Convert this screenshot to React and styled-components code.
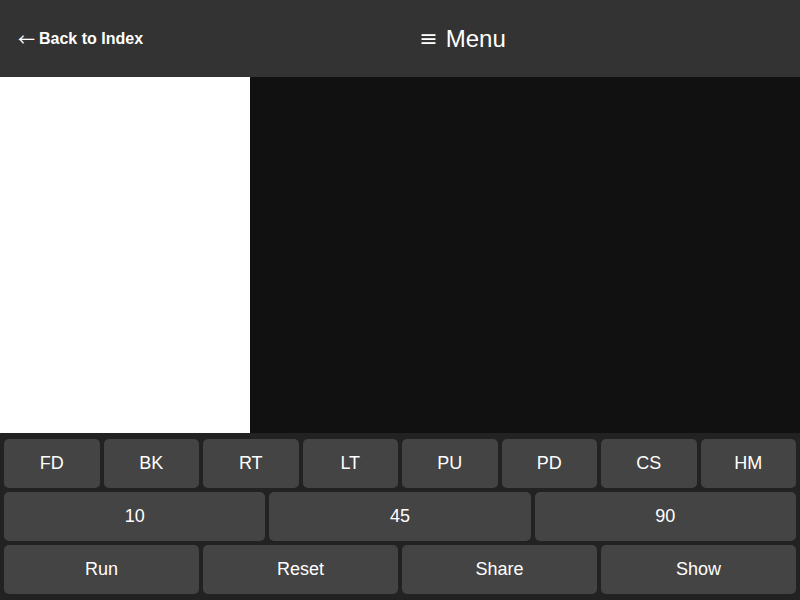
import React from 'react';
import styled, { createGlobalStyle } from 'styled-components';

const GlobalStyle = createGlobalStyle`
    html, body, #root {
        margin: 0;
        padding: 0;
        height: 100%;
    }

    body {
        font-family: 'Liberation Sans', Arial, sans-serif;
        background: #111;
        color: #fff;
        overflow: hidden;
    }
`;

const Page = styled.div`
    display: flex;
    flex-direction: column;
    height: 100vh;
`;

const Header = styled.header`
    height: 77px;
    flex-shrink: 0;
    background: #333;
    display: flex;
    align-items: center;
    justify-content: space-between;
    padding: 0 18px;
    box-sizing: border-box;
`;

const BackLink = styled.a`
    color: #fff;
    font-size: 16px;
    font-weight: 700;
    text-decoration: none;
    cursor: pointer;
    display: flex;
    align-items: center;
    gap: 4px;
`;

const Arrow = styled.span`
    font-family: 'Noto Sans CJK SC', 'DejaVu Sans', sans-serif;
    font-weight: 400;
    font-size: 17px;
`;

const MenuTitle = styled.div`
    font-size: 24px;
    display: flex;
    align-items: center;
    gap: 8px;
`;

const Burger = styled.span`
    font-family: 'DejaVu Sans', sans-serif;
    font-size: 22px;
`;

const Spacer = styled.div`
    width: 0;
`;

const Main = styled.main`
    flex: 1;
    display: flex;
    min-height: 0;
`;

const Sidebar = styled.aside`
    width: 250px;
    background: #fff;
`;

const Canvas = styled.div`
    flex: 1;
    background: #111;
`;

const Controls = styled.div`
    flex-shrink: 0;
    background: #222;
    padding: 6px 4px;
    display: flex;
    flex-direction: column;
    gap: 4px;
`;

const Row = styled.div`
    display: grid;
    grid-template-columns: repeat(${(p) => p.$cols}, 1fr);
    gap: 4px;
`;

const Key = styled.button`
    height: 49px;
    border: none;
    border-radius: 5px;
    background: #444;
    color: #fff;
    font-family: 'Liberation Sans', Arial, sans-serif;
    font-size: 18px;
    padding: 0;
    cursor: pointer;
`;

const commands = ['FD', 'BK', 'RT', 'LT', 'PU', 'PD', 'CS', 'HM'];
const amounts = ['10', '45', '90'];
const actions = ['Run', 'Reset', 'Share', 'Show'];

const App = () => (
    <Page>
        <GlobalStyle />
        <Header>
            <BackLink>
                <Arrow>←</Arrow>
                <span>Back to Index</span>
            </BackLink>
            <MenuTitle>
                <Burger>≡</Burger>
                <span>Menu</span>
            </MenuTitle>
            <Spacer />
        </Header>

        <Main>
            <Sidebar />
            <Canvas />
        </Main>

        <Controls>
            <Row $cols={commands.length}>
                {commands.map((c) => (
                    <Key key={c}>{c}</Key>
                ))}
            </Row>
            <Row $cols={amounts.length}>
                {amounts.map((a) => (
                    <Key key={a}>{a}</Key>
                ))}
            </Row>
            <Row $cols={actions.length}>
                {actions.map((a) => (
                    <Key key={a}>{a}</Key>
                ))}
            </Row>
        </Controls>
    </Page>
);

export default App;
